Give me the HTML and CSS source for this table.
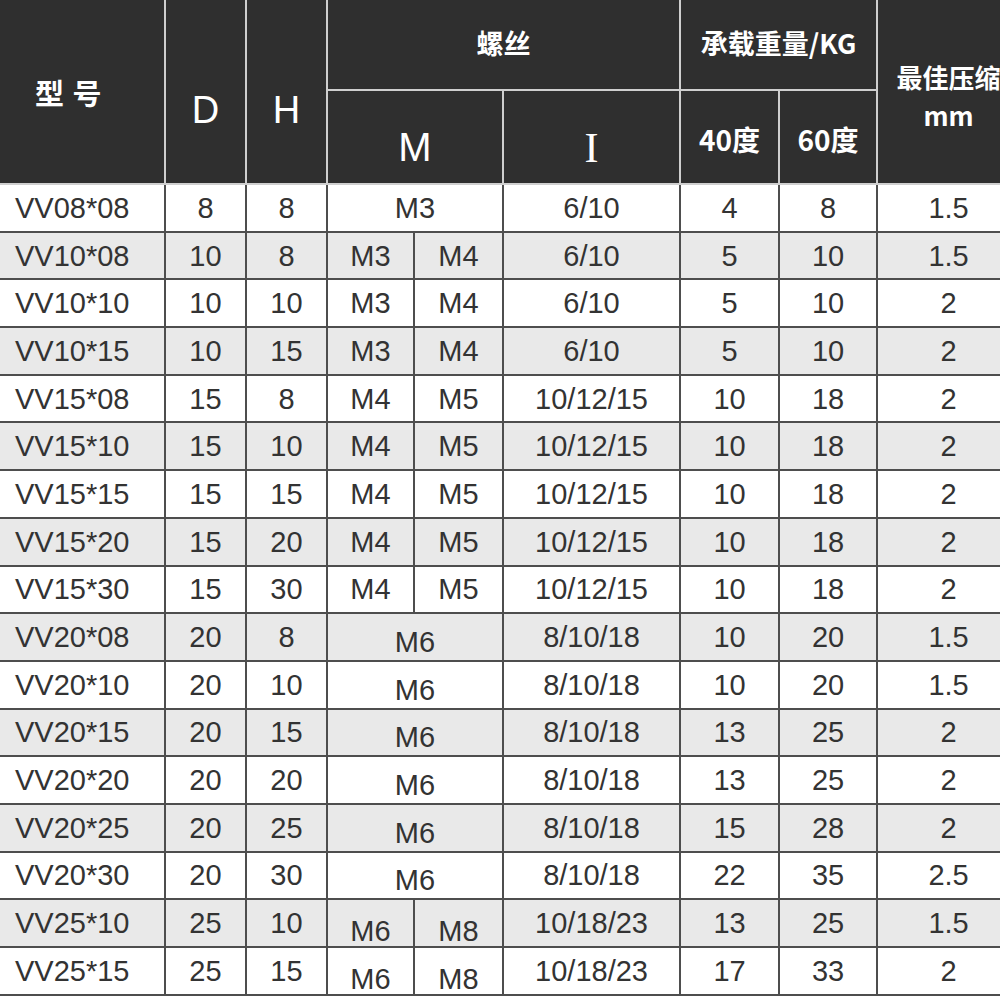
FILE: index.html
```html
<!DOCTYPE html>
<html lang="zh">
<head>
<meta charset="utf-8">
<title>VV 规格表</title>
<link rel="stylesheet" href="styles.css">
</head>
<body>
<table class="spec">
  <colgroup>
    <col class="c-model"><col class="c-d"><col class="c-h"><col class="c-m1"><col class="c-m2"><col class="c-i"><col class="c-w40"><col class="c-w60"><col class="c-best">
  </colgroup>
  <thead>
    <tr class="h1">
      <th rowspan="2" class="hd-model">型 号</th>
      <th rowspan="2" class="hd-latin">D</th>
      <th rowspan="2" class="hd-latin">H</th>
      <th colspan="3" class="hd-cjk">螺丝</th>
      <th colspan="2" class="hd-cjk">承载重量/KG</th>
      <th rowspan="2" class="hd-best">最佳压缩<br>mm</th>
    </tr>
    <tr class="h2">
      <th colspan="2" class="hd-m">M</th>
      <th class="hd-i">I</th>
      <th class="hd-deg">40度</th>
      <th class="hd-deg">60度</th>
    </tr>
  </thead>
  <tbody>
    <tr><td class="model">VV08*08</td><td>8</td><td>8</td><td colspan="2">M3</td><td>6/10</td><td>4</td><td>8</td><td>1.5</td></tr>
    <tr><td class="model">VV10*08</td><td>10</td><td>8</td><td>M3</td><td>M4</td><td>6/10</td><td>5</td><td>10</td><td>1.5</td></tr>
    <tr><td class="model">VV10*10</td><td>10</td><td>10</td><td>M3</td><td>M4</td><td>6/10</td><td>5</td><td>10</td><td>2</td></tr>
    <tr><td class="model">VV10*15</td><td>10</td><td>15</td><td>M3</td><td>M4</td><td>6/10</td><td>5</td><td>10</td><td>2</td></tr>
    <tr><td class="model">VV15*08</td><td>15</td><td>8</td><td>M4</td><td>M5</td><td>10/12/15</td><td>10</td><td>18</td><td>2</td></tr>
    <tr><td class="model">VV15*10</td><td>15</td><td>10</td><td>M4</td><td>M5</td><td>10/12/15</td><td>10</td><td>18</td><td>2</td></tr>
    <tr><td class="model">VV15*15</td><td>15</td><td>15</td><td>M4</td><td>M5</td><td>10/12/15</td><td>10</td><td>18</td><td>2</td></tr>
    <tr><td class="model">VV15*20</td><td>15</td><td>20</td><td>M4</td><td>M5</td><td>10/12/15</td><td>10</td><td>18</td><td>2</td></tr>
    <tr><td class="model">VV15*30</td><td>15</td><td>30</td><td>M4</td><td>M5</td><td>10/12/15</td><td>10</td><td>18</td><td>2</td></tr>
    <tr><td class="model">VV20*08</td><td>20</td><td>8</td><td colspan="2" class="low">M6</td><td>8/10/18</td><td>10</td><td>20</td><td>1.5</td></tr>
    <tr><td class="model">VV20*10</td><td>20</td><td>10</td><td colspan="2" class="low">M6</td><td>8/10/18</td><td>10</td><td>20</td><td>1.5</td></tr>
    <tr><td class="model">VV20*15</td><td>20</td><td>15</td><td colspan="2" class="low">M6</td><td>8/10/18</td><td>13</td><td>25</td><td>2</td></tr>
    <tr><td class="model">VV20*20</td><td>20</td><td>20</td><td colspan="2" class="low">M6</td><td>8/10/18</td><td>13</td><td>25</td><td>2</td></tr>
    <tr><td class="model">VV20*25</td><td>20</td><td>25</td><td colspan="2" class="low">M6</td><td>8/10/18</td><td>15</td><td>28</td><td>2</td></tr>
    <tr><td class="model">VV20*30</td><td>20</td><td>30</td><td colspan="2" class="low">M6</td><td>8/10/18</td><td>22</td><td>35</td><td>2.5</td></tr>
    <tr><td class="model">VV25*10</td><td>25</td><td>10</td><td class="lower">M6</td><td class="lower">M8</td><td>10/18/23</td><td>13</td><td>25</td><td>1.5</td></tr>
    <tr><td class="model">VV25*15</td><td>25</td><td>15</td><td class="lower">M6</td><td class="lower">M8</td><td>10/18/23</td><td>17</td><td>33</td><td>2</td></tr>
  </tbody>
</table>
</body>
</html>
```

FILE: styles.css
```css
html, body {
  margin: 0;
  padding: 0;
  background: #ffffff;
  overflow: hidden;
}

.spec {
  border-collapse: collapse;
  table-layout: fixed;
  width: 1020px;
  font-family: "Liberation Sans", Arial, "Noto Sans CJK SC", sans-serif;
}

.c-model { width: 165px; }
.c-d { width: 81px; }
.c-h { width: 81px; }
.c-m1 { width: 87px; }
.c-m2 { width: 89px; }
.c-i { width: 177px; }
.c-w40 { width: 99px; }
.c-w60 { width: 98px; }
.c-best { width: 143px; }

/* header */
.spec thead th {
  background: #2f2f2f;
  color: #ffffff;
  border: 2px solid #cfcfcf;
  padding: 0;
  vertical-align: middle;
  text-align: center;
  font-weight: 700;
  font-family: "Noto Sans CJK SC", "Liberation Sans", sans-serif;
}
.spec thead tr.h1 th { border-top: none; }
.spec thead tr.h1 { height: 90px; }
.spec thead tr.h2 { height: 94px; }
.spec thead th:first-child { border-left: none; }

.spec thead th.hd-model {
  font-size: 29px;
  text-align: left;
  padding-left: 35px;
  letter-spacing: 1px;
}
.spec thead th.hd-latin {
  font-family: "Liberation Sans", Arial, sans-serif;
  font-weight: 400;
  font-size: 38px;
  padding-top: 38px;
}
.spec thead th.hd-cjk {
  font-size: 27px;
  padding-bottom: 4px;
}
.spec thead th.hd-m {
  font-family: "Liberation Sans", Arial, sans-serif;
  font-weight: 400;
  font-size: 40px;
  padding-top: 20px;
}
.spec thead th.hd-i {
  font-family: "Liberation Serif", "Times New Roman", serif;
  font-weight: 400;
  font-size: 42px;
  padding-top: 22px;
}
.spec thead th.hd-deg {
  font-size: 28px;
  padding-top: 4px;
}
.spec thead th.hd-best {
  font-size: 26px;
  line-height: 38px;
  padding-top: 8px;
}

/* body */
.spec tbody tr { height: 47.7px; }
.spec tbody tr:nth-child(even) td { background: #e9e9e9; }
.spec tbody td {
  border: 2px solid #4e4e4e;
  padding: 0;
  font-size: 29px;
  line-height: 30px;
  color: #333333;
  text-align: center;
  vertical-align: middle;
}
.spec tbody tr:first-child td { border-top-color: #6a6a6a; }
.spec tbody td.model {
  border-left: none;
  text-align: left;
  padding-left: 15px;
}
.spec tbody td.low { padding-top: 10px; }
.spec tbody td.lower { padding-top: 16px; }
```
